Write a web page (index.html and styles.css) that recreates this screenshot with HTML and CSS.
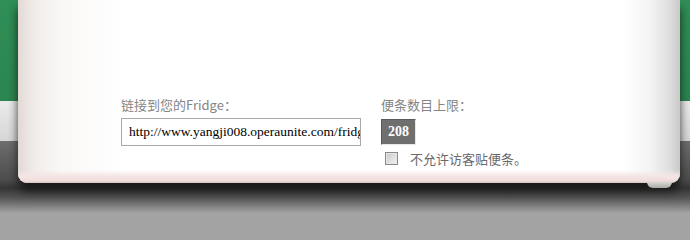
FILE: index.html
```html
<!DOCTYPE html>
<html lang="zh-CN">
<head>
<meta charset="utf-8">
<title>Fridge</title>
<link rel="stylesheet" href="styles.css">
</head>
<body>
<div class="scene">
  <div class="fridge">
    <div class="form">
      <div class="field">
        <label class="label">链接到您的Fridge：</label>
        <div class="url-box">http://www.yangji008.operaunite.com/fridge/</div>
      </div>
      <div class="field">
        <label class="label">便条数目上限：</label>
        <div class="num-box">208</div>
        <div class="check-row">
          <span class="checkbox"></span>
          <span class="check-text">不允许访客贴便条。</span>
        </div>
      </div>
    </div>
    <div class="band"></div>
    <div class="foot"></div>
  </div>
</div>
</body>
</html>
```
FILE: styles.css
```css
html, body {
  margin: 0;
  padding: 0;
  background: #a3a3a3;
}
body {
  width: 690px;
  height: 213px;
  overflow: hidden;
  font-family: "Noto Sans CJK SC", "Noto Sans", sans-serif;
}
.scene {
  width: 690px;
  height: 213px;
  background:
    linear-gradient(180deg, #2f8f55 0px, #2b8650 101px, transparent 101px),
    linear-gradient(180deg, #ebebeb 101px, #d6d6d6 141px, transparent 141px),
    linear-gradient(180deg, #6e6e6e 141px, #4c4c4c 180px, #353535 188px, #555 198px, #a3a3a3 213px);
  overflow: hidden;
}
.fridge {
  position: relative;
  margin-left: 18px;
  width: 662px;
  height: 183px;
  box-sizing: border-box;
  padding: 97px 0 0 103px;
  border-radius: 0 0 9px 9px;
  background:
    linear-gradient(90deg, #e2d9d5 0px, #f1ecea 16px, #faf8f7 45px, #ffffff 110px, #ffffff 605px, #f4f4f4 632px, #dedede 652px, #c9c9c9 662px);
  box-shadow: 0 8px 10px rgba(15, 15, 15, 0.8);
}
.band {
  position: absolute;
  left: 0;
  right: 0;
  bottom: 0;
  height: 13px;
  border-radius: 0 0 9px 9px;
  background: linear-gradient(180deg, rgba(245, 232, 230, 0) 0px, #f4e6e4 6px, #efdcda 11px, #d6c2c0 13px);
}
.foot {
  position: absolute;
  left: 629px;
  top: 182px;
  width: 25px;
  height: 6px;
  border-radius: 0 0 6px 6px;
  background: linear-gradient(180deg, #d8d8d2, #a9aaa4);
}
.form {
  position: relative;
  z-index: 1;
  display: grid;
  grid-template-columns: 260px auto;
}
.field {
  display: flex;
  flex-direction: column;
  align-items: flex-start;
}
.label {
  font-size: 13px;
  line-height: 16px;
  color: #858585;
  height: 21px;
}
.url-box {
  width: 240px;
  height: 28px;
  box-sizing: border-box;
  border: 1px solid #a9a9a9;
  background: #fff;
  padding: 0 7px;
  font-family: "Liberation Serif", serif;
  font-size: 13.5px;
  line-height: 26px;
  color: #000;
  white-space: nowrap;
  overflow: hidden;
}
.num-box {
  margin-top: 1px;
  width: 35px;
  height: 26px;
  box-sizing: border-box;
  border-top: 1px solid #5a5a5a;
  border-left: 1px solid #5a5a5a;
  border-right: 1px solid #e8e8e8;
  border-bottom: 1px solid #e8e8e8;
  background: #6f6f6f;
  color: #fff;
  font-family: "Liberation Serif", serif;
  font-weight: bold;
  font-size: 14px;
  line-height: 24px;
  text-align: center;
}
.check-row {
  display: flex;
  align-items: center;
  margin-top: 6px;
  padding-left: 4px;
  height: 15px;
}
.checkbox {
  width: 11px;
  height: 11px;
  border: 1px solid #8a8a8a;
  background: linear-gradient(135deg, #c8c8c8, #f4f4f4);
  box-shadow: inset 0 0 0 1px #e6e6e6;
}
.check-text {
  margin-left: 12px;
  font-size: 13px;
  line-height: 15px;
  color: #6a6a6a;
}
```
